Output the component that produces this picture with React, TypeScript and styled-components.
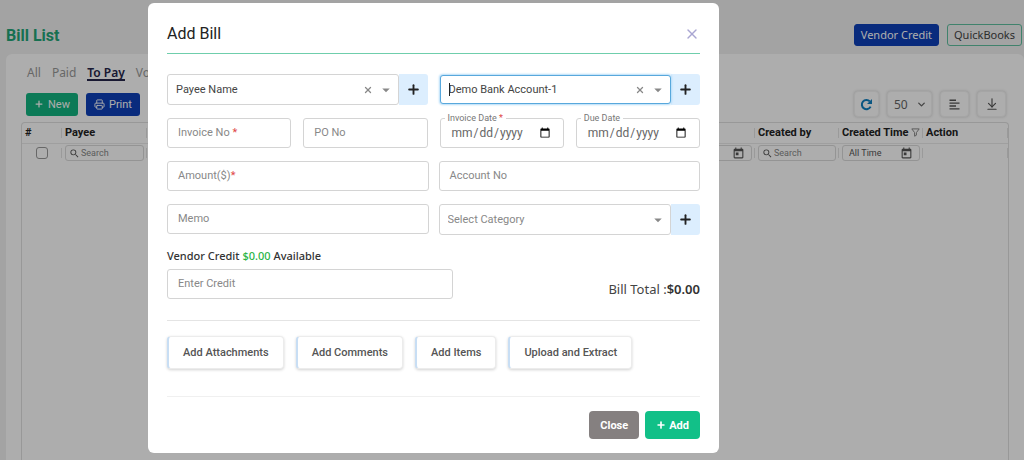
import React from 'react';
import styled, { createGlobalStyle, css } from 'styled-components';
import { MdToday, MdSearch, MdArrowDropDown } from 'react-icons/md';
import { ArrowDownToLine, ChevronDown, Plus, Printer, X } from 'lucide-react';

const roboto = "Roboto, 'Liberation Sans', sans-serif";
const noto = "'Noto Sans', 'Open Sans', sans-serif";

const GlobalStyle = createGlobalStyle`
  * { box-sizing: border-box; }
  body { margin: 0; font-family: ${roboto}; font-size: 11px; color: #333; background: #f0f0f0; }
  button, input, select { font-family: inherit; font-size: inherit; margin: 0; }
  button { cursor: pointer; }
  h1, h2, p { margin: 0; }
`;

/* ---------- Bill list page ---------- */

const Page = styled.div`
  height: 100vh;
  display: flex;
  flex-direction: column;
  padding: 0 0 0 6px;
  overflow: hidden;
`;

const PageHeader = styled.header`
  display: flex;
  align-items: center;
  gap: 8px;
  height: 54px;
  padding: 16px 2px 0 0;
  font-family: ${noto};
`;

const PageTitle = styled.h1`
  flex: 1;
  font: 700 16px ${roboto};
  color: #22a678;
`;

const HeaderButton = styled.button<{ $solid?: boolean }>`
  height: 22px;
  padding: 0 6px;
  border-radius: 3px;
  border: 1px solid ${(p) => (p.$solid ? '#0e40b8' : '#5fc0a0')};
  background: ${(p) => (p.$solid ? '#0e40b8' : 'transparent')};
  color: ${(p) => (p.$solid ? '#fff' : '#444')};
  line-height: 18px;
`;

const Card = styled.main`
  flex: 1;
  display: flex;
  flex-direction: column;
  padding: 9px 15px 0;
  background: #fff;
  border-radius: 6px 6px 0 0;
`;

const Tabs = styled.nav`
  display: flex;
  gap: 11px;
  padding-left: 6px;
  font-family: ${noto};
  font-size: 12px;
`;

const Tab = styled.a<{ $active?: boolean }>`
  line-height: 19px;
  height: 18px;
  text-decoration: none;
  color: ${(p) => (p.$active ? '#26264a' : '#999')};
  font-weight: ${(p) => (p.$active ? 600 : 400)};
  border-bottom: 2px solid ${(p) => (p.$active ? '#26264a' : 'transparent')};
`;

const Toolbar = styled.div`
  display: flex;
  align-items: center;
  gap: 8px;
  height: 30px;
  margin: 8px 3px 3px 5px;
`;

const ActionButton = styled.button<{ $color: string }>`
  display: inline-flex;
  align-items: center;
  gap: 4px;
  height: 23px;
  padding: 0 8px;
  border: 0;
  border-radius: 3px;
  color: #fff;
  background: ${(p) => p.$color};
`;

const Spacer = styled.div`
  flex: 1;
`;

const toolBox = css`
  height: 26px;
  border: 1px solid #f4f4f4;
  border-radius: 4px;
  background: #fff;
  box-shadow: 0 0 3px rgba(0, 0, 0, 0.18);
`;

const ToolButton = styled.button<{ $narrow?: boolean }>`
  ${toolBox}
  display: grid;
  place-items: center;
  width: ${(p) => (p.$narrow ? 25 : 29)}px;
  padding: 0;
  color: #555;
`;

const PageSize = styled.label`
  ${toolBox}
  display: flex;
  align-items: center;
  width: 45px;
  padding: 0 4px 0 6px;
  color: #666;
  font-family: ${noto};

  select {
    flex: 1;
    min-width: 0;
    padding: 0;
    border: 0;
    appearance: none;
    background: none;
    color: inherit;
    font-size: 12px;
  }
`;

const GridFrame = styled.div`
  flex: 1;
  border: 1px solid #e0e0e0;
  border-bottom: 0;
  border-radius: 4px 4px 0 0;
`;

const Grid = styled.table`
  width: 100%;
  table-layout: fixed;
  border-collapse: collapse;

  th, td {
    height: 20px;
    padding: 0 3px;
    text-align: left;
    white-space: nowrap;
    border-bottom: 1px solid #eaeaea;
    background: linear-gradient(#e4e4e4, #e4e4e4) right center / 1px 10px no-repeat;
  }
  th { font-weight: 700; color: #222; }
  td { border-bottom: 0; }
`;

const HeadCell = styled.span`
  display: flex;
  align-items: center;
  justify-content: space-between;
`;

const FilterBox = styled.label<{ $date?: boolean }>`
  display: flex;
  align-items: center;
  gap: 1px;
  height: 16px;
  padding: 0 ${(p) => (p.$date ? 6 : 3)}px;
  border: 1px solid #dadada;
  border-radius: 3px;
  color: #555;

  input, select {
    flex: 1;
    min-width: 0;
    padding: 0;
    border: 0;
    outline: 0;
    appearance: none;
    background: none;
    color: #555;
    font-size: 9px;
  }
  input::placeholder { color: #888; }
`;

const RowCheck = styled.input`
  display: block;
  width: 12px;
  height: 12px;
  margin: 0 0 0 auto;
  appearance: none;
  border: 1px solid #999;
  border-radius: 3px;
`;

const CheckCell = styled.td`
  && { padding-right: 14px; }
`;

/* ---------- Add bill dialog ---------- */

const Overlay = styled.div`
  position: fixed;
  inset: 0;
  display: grid;
  grid-template-columns: 148fr 571fr 305fr;
  align-items: start;
  padding-top: 3px;
  overflow: auto;
  background: rgba(0, 0, 0, 0.32);
`;

const Dialog = styled.section`
  grid-column: 2;
  padding: 15px 19px 14px;
  border-radius: 6px;
  background: #fff;
`;

const DialogHeader = styled.header`
  display: flex;
  align-items: center;
  justify-content: space-between;
  height: 36px;
  padding-bottom: 4px;
  border-bottom: 1px solid #6fceac;
`;

const DialogTitle = styled.h2`
  font-size: 16px;
  font-weight: 400;
  color: #222;
`;

const IconButton = styled.button`
  display: grid;
  place-items: center;
  padding: 0;
  border: 0;
  background: none;
  color: #a9a6d2;
`;

const Form = styled.form`
  display: flex;
  flex-direction: column;
  gap: 13px;
  padding-top: 20px;
`;

const Row = styled.div<{ $gap: number }>`
  display: grid;
  grid-template-columns: repeat(2, minmax(0, 1fr));
  gap: ${(p) => p.$gap}px;
`;

const Group = styled.div`
  display: flex;
  align-items: center;
`;

const SelectBox = styled.div<{ $focused?: boolean }>`
  position: relative;
  flex: 1;
  display: flex;
  align-items: center;
  height: ${(p) => (p.$focused ? 29 : 31)}px;
  padding: 0 3px 0 8px;
  border: 1px solid ${(p) => (p.$focused ? '#58a8dc' : '#d4d4d4')};
  border-radius: 3px;
  background: #fff;
  box-shadow: ${(p) => (p.$focused ? '0 0 2px 1px #b4dcf8' : 'none')};

  select {
    flex: 1;
    min-width: 0;
    padding: 0;
    border: 0;
    outline: 0;
    appearance: none;
    background: none;
    color: #444;
  }
`;

const PlaceholderSelect = styled(SelectBox)`
  select { color: #888; }
`;

const Caret = styled.span`
  position: absolute;
  left: 8px;
  width: 1px;
  height: 13px;
  background: #222;
`;

const ClearButton = styled(IconButton)`
  margin-right: 4px;
  color: #888;
`;

const PlusButton = styled.button`
  display: grid;
  place-items: center;
  width: 29px;
  height: 31px;
  padding: 0;
  border: 0;
  border-radius: 0 3px 3px 0;
  background: #dceefe;
  color: #222;
`;

const Field = styled.div`
  position: relative;
  height: 30px;

  input {
    display: block;
    width: 100%;
    height: 100%;
    padding: 0 10px;
    border: 1px solid #d4d4d4;
    border-radius: 3px;
    background: #fff;
    color: #666;
    outline: 0;
  }
  input[type='date'] { font-size: 12px; }
`;

const FieldLabel = styled.label<{ $raised?: boolean }>`
  position: absolute;
  left: ${(p) => (p.$raised ? 5 : 11)}px;
  top: ${(p) => (p.$raised ? -5 : 0)}px;
  padding: ${(p) => (p.$raised ? '0 3px' : '0')};
  line-height: ${(p) => (p.$raised ? 10 : 30)}px;
  font-size: ${(p) => (p.$raised ? 9 : 11)}px;
  color: ${(p) => (p.$raised ? '#777' : '#888')};
  background: ${(p) => (p.$raised ? '#fff' : 'none')};

  em { font-style: normal; color: #e04848; }
`;

const CreditNote = styled.p`
  font: 500 11px/16px ${noto};
  color: #333;

  span { color: #28b446; }
`;

const CreditRow = styled.div`
  display: flex;
  justify-content: space-between;
  align-items: center;
  margin-top: -8px;
`;

const CreditField = styled.div`
  flex: 0 1 286px;
`;

const BillTotal = styled.p`
  padding-top: 10px;
  font: 400 13px/20px ${noto};
  color: #444;

  strong { font-weight: 600; color: #333; }
`;

const Extras = styled.div`
  display: flex;
  gap: 12px;
  margin-top: 21px;
  padding: 15px 0 27px;
  border-top: 1px solid #e4e4e4;
  border-bottom: 1px solid #f0f0f0;
`;

const ExtraButton = styled.button`
  height: 33px;
  padding: 0 14px;
  border: 1px solid #ececec;
  border-left: 2px solid #c8def4;
  border-radius: 4px;
  background: #fff;
  box-shadow: 0 1px 3px rgba(0, 0, 0, 0.18);
  color: #555;
  font-weight: 500;
`;

const DialogFooter = styled.footer`
  display: flex;
  justify-content: flex-end;
  gap: 6px;
  padding-top: 14px;
`;

const FooterButton = styled.button<{ $primary?: boolean }>`
  display: inline-flex;
  align-items: center;
  gap: 3px;
  height: 28px;
  padding: 0 11px;
  border: 0;
  border-radius: 4px;
  background: ${(p) => (p.$primary ? '#12c088' : '#858080')};
  color: #fff;
  font-weight: 700;
`;

function RefreshIcon() {
  return (
    <svg width="13" height="13" viewBox="0 0 13 13" fill="none" stroke="#0f7fc0" strokeWidth="2">
      <path d="M10.6 8.6A4.6 4.6 0 1 1 9.8 3.4" />
      <path d="M12 1V6H7Z" fill="#0f7fc0" stroke="none" />
    </svg>
  );
}

function LinesIcon() {
  return (
    <svg width="11" height="11" viewBox="0 0 11 11" stroke="#555" strokeWidth="1.4">
      <path d="M0.5 1.2H7M0.5 4.1H10.5M0.5 7H7M0.5 9.9H10.5" />
    </svg>
  );
}

function FunnelIcon() {
  return (
    <svg width="9" height="9" viewBox="0 0 9 9" fill="none" stroke="#888">
      <path d="M0.8 0.9H8.2L5.4 4.6V7.2L3.6 8.2V4.6Z" />
    </svg>
  );
}

type SearchProps = { label: string };

function SearchFilter({ label }: SearchProps) {
  return (
    <FilterBox>
      <MdSearch size={11} stroke="#555" />
      <input aria-label={label} placeholder="Search" />
    </FilterBox>
  );
}

function DateFilter({ value }: { value: string }) {
  return (
    <FilterBox $date>
      <select aria-label="All Time">
        <option>{value}</option>
      </select>
      <MdToday size={13} />
    </FilterBox>
  );
}

type TextFieldProps = { id: string; label: string; required?: boolean; tight?: boolean; date?: boolean };

function TextField({ id, label, required, tight, date }: TextFieldProps) {
  return (
    <Field>
      <input id={id} type={date ? 'date' : 'text'} />
      <FieldLabel htmlFor={id} $raised={date}>
        {label}
        {required && <em>{tight ? '*' : ' *'}</em>}
      </FieldLabel>
    </Field>
  );
}

function AddButton({ label }: { label: string }) {
  return (
    <PlusButton type="button" aria-label={label}>
      <Plus size={15} strokeWidth={3} />
    </PlusButton>
  );
}

function BillList() {
  return (
    <Page>
      <PageHeader>
        <PageTitle>Bill List</PageTitle>
        <HeaderButton $solid>Vendor Credit</HeaderButton>
        <HeaderButton>QuickBooks</HeaderButton>
      </PageHeader>
      <Card>
        <Tabs>
          <Tab href="#all">All</Tab>
          <Tab href="#paid">Paid</Tab>
          <Tab href="#to-pay" $active>To Pay</Tab>
          <Tab href="#void">Void</Tab>
        </Tabs>
        <Toolbar>
          <ActionButton $color="#12b480"><Plus size={10} strokeWidth={3} />New</ActionButton>
          <ActionButton $color="#0e40b8"><Printer size={11} />Print</ActionButton>
          <Spacer />
          <ToolButton $narrow aria-label="Refresh"><RefreshIcon /></ToolButton>
          <PageSize>
            <select aria-label="Rows"><option>50</option></select>
            <ChevronDown size={11} strokeWidth={3} />
          </PageSize>
          <ToolButton aria-label="Columns"><LinesIcon /></ToolButton>
          <ToolButton aria-label="Download"><ArrowDownToLine size={14} /></ToolButton>
        </Toolbar>
        <GridFrame>
          <Grid>
            <colgroup>
              <col width="40" />
              <col width="85" />
              <col />
              <col width="84" />
              <col width="84" />
              <col width="84" />
              <col width="85" />
            </colgroup>
            <thead>
              <tr>
                <th>#</th>
                <th>Payee</th>
                <th />
                <th />
                <th>Created by</th>
                <th><HeadCell>Created Time<FunnelIcon /></HeadCell></th>
                <th>Action</th>
              </tr>
            </thead>
            <tbody>
              <tr>
                <CheckCell><RowCheck type="checkbox" aria-label="#" /></CheckCell>
                <td><SearchFilter label="Payee" /></td>
                <td />
                <td><DateFilter value="All Time" /></td>
                <td><SearchFilter label="Created by" /></td>
                <td><DateFilter value="All Time" /></td>
                <td />
              </tr>
            </tbody>
          </Grid>
        </GridFrame>
      </Card>
    </Page>
  );
}

function AddBillDialog() {
  return (
    <Overlay>
      <Dialog role="dialog" aria-labelledby="dialog-title">
        <DialogHeader>
          <DialogTitle id="dialog-title">Add Bill</DialogTitle>
          <IconButton aria-label="Close"><X size={16} strokeWidth={2} /></IconButton>
        </DialogHeader>
        <Form>
          <Row $gap={12}>
            <Group>
              <SelectBox>
                <select aria-label="Payee Name"><option>Payee Name</option></select>
                <ClearButton type="button" aria-label="Clear"><X size={10} strokeWidth={3} /></ClearButton>
                <MdArrowDropDown size={18} color="#888" />
              </SelectBox>
              <AddButton label="Add payee" />
            </Group>
            <Group>
              <SelectBox $focused>
                <Caret />
                <select aria-label="Bank account"><option>Demo Bank Account-1</option></select>
                <ClearButton type="button" aria-label="Clear"><X size={10} strokeWidth={3} /></ClearButton>
                <MdArrowDropDown size={18} color="#888" />
              </SelectBox>
              <AddButton label="Add bank account" />
            </Group>
          </Row>
          <Row $gap={12}>
            <Row $gap={12}>
              <TextField id="invoice-no" label="Invoice No" required />
              <TextField id="po-no" label="PO No" />
            </Row>
            <Row $gap={12}>
              <TextField id="invoice-date" label="Invoice Date" required date />
              <TextField id="due-date" label="Due Date" date />
            </Row>
          </Row>
          <Row $gap={10}>
            <TextField id="amount" label="Amount($)" required tight />
            <TextField id="account-no" label="Account No" />
          </Row>
          <Row $gap={10}>
            <TextField id="memo" label="Memo" />
            <Group>
              <PlaceholderSelect>
                <select aria-label="Category"><option>Select Category</option></select>
                <MdArrowDropDown size={18} color="#888" />
              </PlaceholderSelect>
              <AddButton label="Add category" />
            </Group>
          </Row>
          <CreditNote>Vendor Credit <span>$0.00</span> Available</CreditNote>
          <CreditRow>
            <CreditField><TextField id="credit" label="Enter Credit" /></CreditField>
            <BillTotal>Bill Total :<strong>$0.00</strong></BillTotal>
          </CreditRow>
        </Form>
        <Extras>
          <ExtraButton>Add Attachments</ExtraButton>
          <ExtraButton>Add Comments</ExtraButton>
          <ExtraButton>Add Items</ExtraButton>
          <ExtraButton>Upload and Extract</ExtraButton>
        </Extras>
        <DialogFooter>
          <FooterButton>Close</FooterButton>
          <FooterButton $primary><Plus size={10} strokeWidth={4} />Add</FooterButton>
        </DialogFooter>
      </Dialog>
    </Overlay>
  );
}

export default function App() {
  return (
    <>
      <GlobalStyle />
      <BillList />
      <AddBillDialog />
    </>
  );
}
